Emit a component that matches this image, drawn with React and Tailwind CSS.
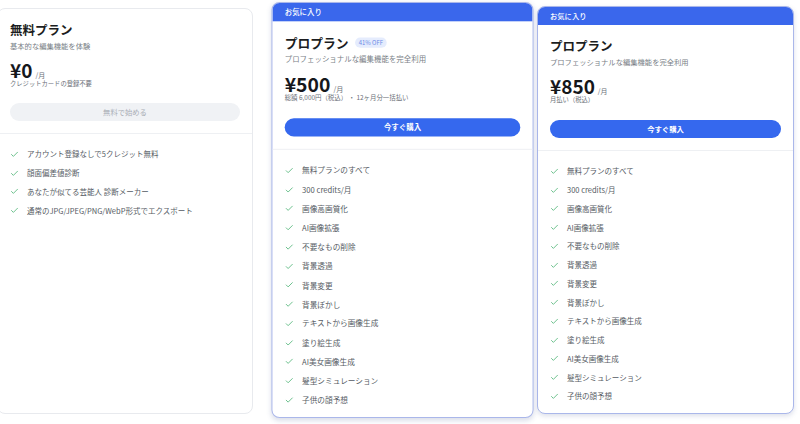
import React from 'react';
import { Check } from 'lucide-react';

const freeFeatures = [
  'アカウント登録なしで5クレジット無料',
  '顔面偏差値診断',
  'あなたが似てる芸能人 診断メーカー',
  '通常のJPG/JPEG/PNG/WebP形式でエクスポート',
];

const proFeatures = [
  '無料プランのすべて',
  '300 credits/月',
  '画像高画質化',
  'AI画像拡張',
  '不要なもの削除',
  '背景透過',
  '背景変更',
  '背景ぼかし',
  'テキストから画像生成',
  '塗り絵生成',
  'AI美女画像生成',
  '髪型シミュレーション',
  '子供の顔予想',
];

const FeatureList = ({ items }) => (
  <ul className="px-3 pt-[11px]">
    {items.map((item) => (
      <li key={item} className="h-[18.75px] flex items-center gap-[8px] text-[7.5px] leading-[10px] text-[#555b63]">
        <Check className="w-[9px] h-[9px] text-[#3fae6a] flex-shrink-0" strokeWidth={2} />
        {item}
      </li>
    ))}
  </ul>
);

const PlanCard = ({ favorite, title, badge, subtitle, price, note, button, features, className }) => (
  <div
    className={
      favorite
        ? `flex flex-col bg-white border border-[#aab7ea] rounded-lg overflow-hidden shadow-[0_2px_5px_rgba(60,80,140,0.18)] ${className}`
        : `flex flex-col bg-white border border-[#e8eaee] rounded-lg overflow-hidden ${className}`
    }
  >
    {favorite && (
      <div className="h-[18px] bg-[#3a67ec] flex items-center px-3 text-[7.3px] text-white font-medium">
        お気に入り
      </div>
    )}
    <div className="px-3 pt-[13px] pb-3 border-b border-[#eef0f3]">
      <div className="flex items-center">
        <h3 className="text-[12.5px] leading-[16px] font-bold text-[#1b1d21]">{title}</h3>
        {badge && (
          <span className="ml-[6px] h-[10px] px-[4px] rounded-full bg-[#e5ecfd] text-[#6a8ae6] text-[5.8px] leading-[10px]">
            {badge}
          </span>
        )}
      </div>
      <p className="mt-[3px] text-[7.3px] leading-[10px] text-[#7a7f87]">{subtitle}</p>
      <div className="mt-[9px] flex items-baseline h-[20px]">
        <span className="text-[19px] leading-[20px] font-bold text-[#15171b]">{price}</span>
        <span className="ml-[3px] text-[7px] leading-[10px] text-[#6b7078]">/月</span>
      </div>
      <p className="text-[6.3px] leading-[8px] text-[#6b7078]">{note}</p>
      {favorite ? (
        <button className="mt-[16px] w-full h-[18px] rounded-full bg-[#3568ee] text-white text-[7.3px] font-bold">
          {button}
        </button>
      ) : (
        <button className="mt-[15px] w-full h-[18px] rounded-full bg-[#f0f2f5] text-[#a9aeb6] text-[7.3px]">
          {button}
        </button>
      )}
    </div>
    <FeatureList items={features} />
  </div>
);

export default function App() {
  return (
    <div
      className="w-[800px] h-[424px] bg-white overflow-hidden flex items-start pt-[6px]"
      style={{ fontFamily: '"Noto Sans CJK JP", "Noto Sans", sans-serif' }}
    >
      <PlanCard
        className="ml-[-3px] mt-[2px] w-[256px] h-[406px] flex-shrink-0"
        title="無料プラン"
        subtitle="基本的な編集機能を体験"
        price="¥0"
        note="クレジットカードの登録不要"
        button="無料で始める"
        features={freeFeatures}
      />
      <PlanCard
        favorite
        className="ml-[21px] w-[257px] h-[408px] flex-shrink-0 scale-[1.02]"
        title="プロプラン"
        badge="41% OFF"
        subtitle="プロフェッショナルな編集機能を完全利用"
        price="¥500"
        note="総額 6,000円（税込） ・ 12ヶ月分一括払い"
        button="今すぐ購入"
        features={proFeatures}
      />
      <PlanCard
        favorite
        className="ml-[6px] w-[257px] h-[408px] flex-shrink-0"
        title="プロプラン"
        subtitle="プロフェッショナルな編集機能を完全利用"
        price="¥850"
        note="月払い（税込）"
        button="今すぐ購入"
        features={proFeatures}
      />
    </div>
  );
}
